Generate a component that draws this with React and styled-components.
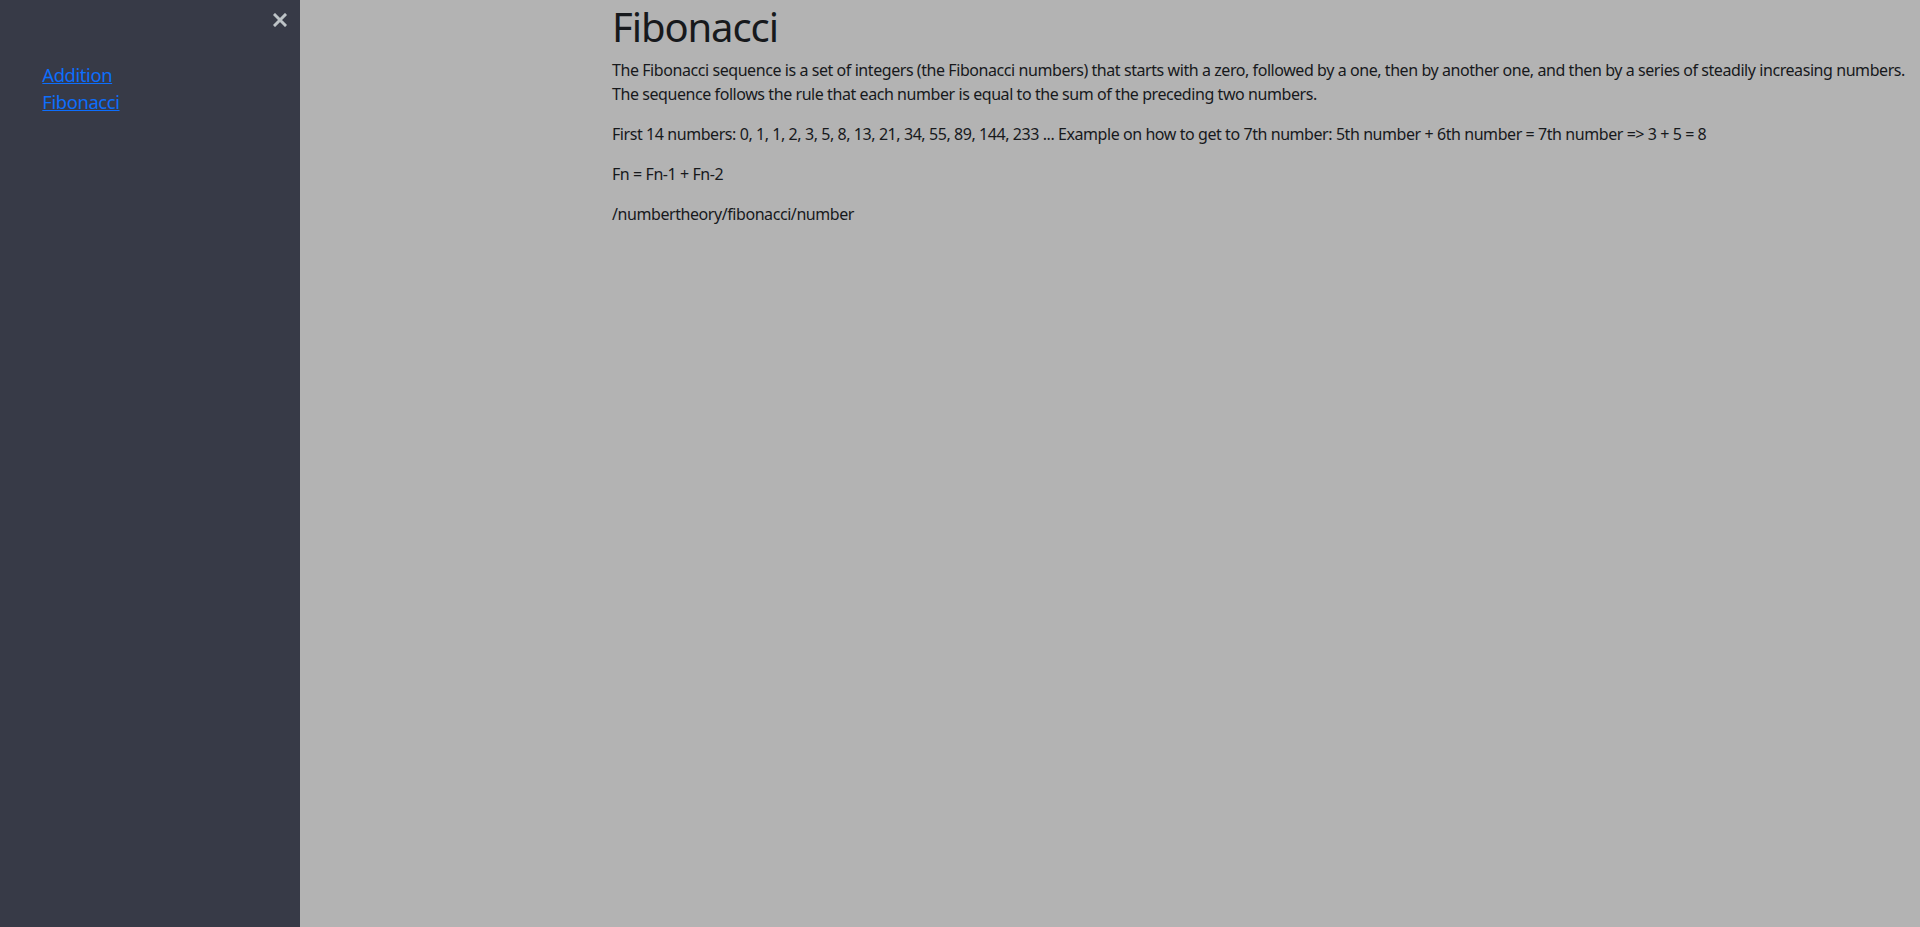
import { createGlobalStyle, styled } from "styled-components";

const GlobalStyle = createGlobalStyle`
  html, body {
    margin: 0;
    padding: 0;
    height: 100%;
  }
  body {
    font-family: "Noto Sans", "Open Sans", sans-serif;
    font-size: 16px;
    line-height: 1.5;
    color: #17191c;
    background: #b3b3b3;
  }
  #root {
    height: 100%;
  }
`;

const Layout = styled.div`
  display: flex;
  height: 100vh;
  overflow: hidden;
`;

const Menu = styled.nav`
  position: relative;
  flex: 0 0 300px;
  background: #373a47;
  padding: 2.5em 1.5em 0;
  font-size: 1.15em;
  box-sizing: border-box;
`;

const CloseButton = styled.button`
  position: absolute;
  top: 8px;
  right: 8px;
  width: 24px;
  height: 24px;
  padding: 0;
  border: none;
  background: transparent;
  color: #bdc3c7;
  display: flex;
  align-items: center;
  justify-content: center;
  cursor: pointer;
`;

const ItemList = styled.div`
  display: flex;
  flex-direction: column;
  padding: 0.8em 0.8em 0 0.8em;
`;

const MenuLink = styled.a`
  color: #0d6efd;
  text-decoration: underline;
  line-height: 1.5;
  letter-spacing: -0.4px;
  align-self: flex-start;
`;

const Page = styled.main`
  flex: 1;
  min-width: 0;
  overflow: hidden;
  letter-spacing: -0.43px;
`;

const Container = styled.div`
  width: 1296px;
  margin-left: 312px;
`;

const Title = styled.h1`
  margin: 0 0 7px;
  padding-top: 3px;
  font-size: 40px;
  font-weight: 400;
  line-height: 1.2;
  letter-spacing: -1.1px;
`;

const Paragraph = styled.p`
  margin: 0 0 16px;
`;

function CrossIcon() {
  return (
    <svg width="14" height="14" viewBox="0 0 14 14">
      <path
        d="M2 2 L12 12 M12 2 L2 12"
        stroke="currentColor"
        strokeWidth="3"
        strokeLinecap="square"
      />
    </svg>
  );
}

export default function App() {
  return (
    <>
      <GlobalStyle />
      <Layout>
        <Menu>
          <CloseButton aria-label="Close menu">
            <CrossIcon />
          </CloseButton>
          <ItemList>
            <MenuLink href="#addition">Addition</MenuLink>
            <MenuLink href="#fibonacci">Fibonacci</MenuLink>
          </ItemList>
        </Menu>
        <Page>
          <Container>
            <Title>Fibonacci</Title>
            <Paragraph>
              The Fibonacci sequence is a set of integers (the Fibonacci numbers) that starts
              with a zero, followed by a one, then by another one, and then by a series of
              steadily increasing numbers. The sequence follows the rule that each number is
              equal to the sum of the preceding two numbers.
            </Paragraph>
            <Paragraph>
              First 14 numbers: 0, 1, 1, 2, 3, 5, 8, 13, 21, 34, 55, 89, 144, 233 ... Example on
              how to get to 7th number: 5th number + 6th number = 7th number =&gt; 3 + 5 = 8
            </Paragraph>
            <Paragraph>Fn = Fn-1 + Fn-2</Paragraph>
            <Paragraph>/numbertheory/fibonacci/number</Paragraph>
          </Container>
        </Page>
      </Layout>
    </>
  );
}
